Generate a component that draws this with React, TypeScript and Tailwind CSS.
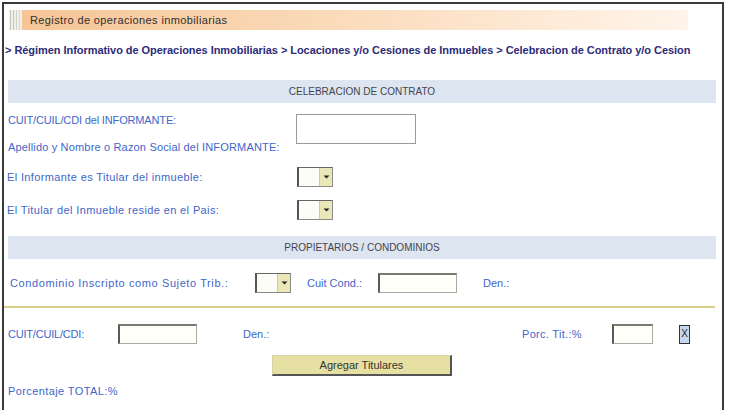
import React from "react";

const Select = () => (
  <div className="flex h-[20px] w-[36px] border border-[#8a8a8a] border-l-2 border-l-[#555] border-t-[#666] bg-[#fdfdf8]">
    <div className="flex-1" />
    <div className="flex w-[13px] items-center justify-center border-l border-[#cfcaa0] bg-[#ece7b8]">
      <svg width="7" height="4" viewBox="0 0 7 4">
        <path d="M0.5 0.5h6L3.5 3.5z" fill="#222" />
      </svg>
    </div>
  </div>
);

const Input = ({ w, h = 20 }: { w: number; h?: number }) => (
  <div
    className="border border-[#a9a9a0] border-l-2 border-t-2 border-l-[#5a5a5a] border-t-[#7a7a70] bg-[#fffffa]"
    style={{ width: w, height: h }}
  />
);

const SectionBar = ({ children }: { children: React.ReactNode }) => (
  <div className="ml-[4px] flex h-[23px] w-[708px] items-center justify-center bg-[#dce5f0] text-[10px] text-[#44444f]">
    {children}
  </div>
);

export default function App() {
  return (
    <div className="h-[410px] w-[730px] overflow-hidden bg-white font-['Liberation_Sans',Arial,sans-serif] text-[11px] leading-[16px]">
      <div className="ml-[2px] mt-[2px] h-[420px] w-[722px] border-l-2 border-r-2 border-t-2 border-[#3a3a3a]">
        {/* header */}
        <div className="ml-[5px] mt-[6px] flex h-[20px]">
          <div className="flex w-[13px] gap-[2px] bg-[#efefea] px-[1px]">
            <div className="w-px bg-[#c8c8c0]" />
            <div className="w-px bg-[#c8c8c0]" />
            <div className="w-px bg-[#d0d0c8]" />
            <div className="w-px bg-[#d8d8d0]" />
          </div>
          <div className="flex w-[666px] items-center bg-gradient-to-r from-[#f5c596] via-[#fbdcbc] to-[#fff4ea] pl-[8px] text-[11px] tracking-[0.38px] text-[#2f2f2f]">
            Registro de operaciones inmobiliarias
          </div>
        </div>

        {/* breadcrumb */}
        <div className="mt-[12px] h-[16px] whitespace-nowrap pl-[1px] text-[11px] font-bold tracking-[-0.05px] text-[#2c2c78]">
          &gt; Régimen Informativo de Operaciones Inmobiliarias &gt; Locaciones y/o Cesiones de Inmuebles &gt; Celebracion de Contrato y/o Cesion
        </div>

        <div className="mt-[22px]">
          <SectionBar>CELEBRACION DE CONTRATO</SectionBar>
        </div>

        <div className="text-[#3f66c8]">
          <div className="mt-[9px] flex items-start">
            <div className="ml-[4px] w-[288px] whitespace-nowrap">
              <div className="h-[16px] tracking-[-0.15px]">CUIT/CUIL/CDI del INFORMANTE:</div>
              <div className="mt-[11px] h-[16px] tracking-[0.17px]">Apellido y Nombre o Razon Social del INFORMANTE:</div>
            </div>
            <div className="mt-[2px]">
              <div className="h-[30px] w-[120px] border border-[#9a9a9a] bg-white" />
            </div>
          </div>

          <div className="mt-[12px] flex h-[20px] items-center">
            <div className="ml-[3px] w-[290px] tracking-[0.37px]">El Informante es Titular del inmueble:</div>
            <Select />
          </div>

          <div className="mt-[13px] flex h-[20px] items-center">
            <div className="ml-[3px] w-[290px] tracking-[0.38px]">El Titular del Inmueble reside en el Pais:</div>
            <Select />
          </div>

          <div className="mt-[16px]">
            <SectionBar>PROPIETARIOS / CONDOMINIOS</SectionBar>
          </div>

          <div className="mt-[14px] flex h-[20px] items-center">
            <div className="ml-[6px] w-[245px] whitespace-nowrap tracking-[0.6px]">Condominio Inscripto como Sujeto Trib.:</div>
            <Select />
            <div className="ml-[16px] w-[71px]">Cuit Cond.:</div>
            <Input w={79} />
            <div className="ml-[26px]">Den.:</div>
          </div>

          <div className="mt-[13px] h-[2px] w-[711px] bg-[#d8d08a]" />

          <div className="mt-[16px] flex h-[20px] items-center">
            <div className="ml-[4px] w-[110px] tracking-[-0.2px]">CUIT/CUIL/CDI:</div>
            <Input w={79} />
            <div className="ml-[46px] w-[279px]">Den.:</div>
            <div className="w-[90px] tracking-[0.3px]">Porc. Tit.:%</div>
            <Input w={41} />
            <div className="ml-[26px] flex h-[19px] w-[11px] items-center justify-center border border-[#333] bg-[#c9d7ee] text-[10px] text-[#222]">
              X
            </div>
          </div>

          <div className="mt-[11px] ml-[268px] flex h-[21px] w-[180px] items-center justify-center border border-[#d8d4a8] border-b-2 border-r-2 border-b-[#555] border-r-[#555] bg-[#e6e0a2] text-[11px] text-[#333]">
            Agregar Titulares
          </div>

          <div className="ml-[4px] mt-[7px] h-[16px] tracking-[0.4px]">Porcentaje TOTAL:%</div>
        </div>
      </div>
    </div>
  );
}
